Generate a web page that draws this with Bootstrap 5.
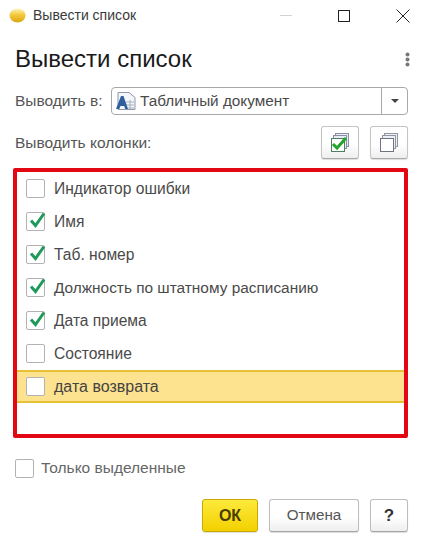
<!DOCTYPE html>
<html lang="ru">
<head>
    <meta charset="UTF-8">
    <meta name="viewport" content="width=device-width, initial-scale=1.0">
    <title>Вывести список</title>
    <link href="https://cdn.jsdelivr.net/npm/bootstrap@5.3.0/dist/css/bootstrap.min.css" rel="stylesheet">
    <style>
        html, body { height: 546px; overflow: hidden; }
        body {
            font-family: "Liberation Sans", Arial, sans-serif;
            font-size: 15.5px;
            color: #555;
            background: #fff;
        }
        .title-strip { height: 31px; padding-left: 9px; color: #3a3a3a; font-size: 14px; }
        .title-strip .title-text { margin-left: 7px; }
        .win-row { margin-right: 21px; gap: 46px; }
        .form-head { padding: 13px 21px 0 15px; height: 56px; }
        .form-head h1 { font-size: 24px; font-weight: 400; color: #1a1a1a; margin: 0; line-height: 30px; }
        .dots { width: 5px; margin-top: 8px; }
        .body-pad { padding: 0 23px 0 15px; }
        .out-row { height: 28px; white-space: nowrap; }
        .out-select {
            width: 297px; height: 28px; margin-left: auto; flex: none;
            border: 1px solid #a8a8a8; border-radius: 4px; color: #4a4a4a;
        }
        .out-value { padding-left: 3px; gap: 4px; font-size: 15.3px; }
        .out-arrow { width: 26px; height: 100%; border-left: 1px solid #a8a8a8; }
        .cols-row { height: 33px; margin-top: 11px; }
        .tool-row { gap: 11px; }
        .tool-btn {
            width: 38px; height: 33px; padding: 0;
            border: 1px solid #c4c4c4; border-bottom-color: #a9a9a9; border-radius: 3px;
            background: linear-gradient(#fff 55%, #eee);
            box-shadow: 0 1px 1px #ddd;
        }
        .red-frame {
            margin: 9px 23px 0 13px; height: 270px;
            border: 4px solid #e30613; border-radius: 2px;
        }
        .col-line { height: 33px; padding-left: 9px; color: #4a4a4a; font-size: 15.6px; }
        .col-line.picked {
            background: #fde28f;
            border-top: 2px solid #e8c033; border-bottom: 2px solid #e8c033;
            color: #444; font-size: 16px;
        }
        .col-long { font-size: 15.4px; }
        .box-mark {
            width: 19px; height: 19px; flex: none; position: relative;
            background: #fff; border: 1px solid #b3b3b3; border-radius: 2px; margin-right: 9px;
        }
        .box-mark svg { position: absolute; left: 1px; top: -3px; }
        .only-row { margin: 20px 0 0 15px; height: 20px; color: #666; }
        .only-row .box-mark { margin-right: 7px; }
        .foot-row { margin: 21px 23px 0 0; gap: 11px; }
        .act-btn {
            height: 33px; padding: 0; font-size: 15.2px; color: #555;
            border: 1px solid #bdbdbd; border-bottom-color: #a5a5a5; border-radius: 3px;
            background: linear-gradient(#fff 55%, #eee);
            box-shadow: 0 1px 1px #ddd;
        }
        .act-ok {
            width: 56px; font-weight: 700; color: #4a3d00; font-size: 16px;
            background: linear-gradient(#fdea3c, #f3d000);
            border-color: #c9a900;
        }
        .act-cancel { width: 90px; }
        .act-help { width: 38px; font-weight: 700; color: #333; font-size: 17px; }
    </style>
</head>
<body>

    <div class="title-strip d-flex align-items-center">
        <svg width="17" height="15" viewBox="0 0 17 15">
            <defs>
                <linearGradient id="ball" x1="0" y1="0" x2="0" y2="1">
                    <stop offset="0" stop-color="#fff3c0"/>
                    <stop offset="0.45" stop-color="#f4c93c"/>
                    <stop offset="1" stop-color="#d9a514"/>
                </linearGradient>
            </defs>
            <ellipse cx="8.5" cy="7.5" rx="8" ry="7" fill="url(#ball)"/>
        </svg>
        <span class="title-text">Вывести список</span>
        <div class="ms-auto d-flex align-items-center win-row">
            <svg width="12" height="2"><rect width="12" height="1" fill="#d2d2d2"/></svg>
            <svg width="12" height="12"><rect x="0.5" y="0.5" width="11" height="11" fill="none" stroke="#222"/></svg>
            <svg width="14" height="14"><path d="M0.5 0.5L13.5 13.5M13.5 0.5L0.5 13.5" stroke="#222" fill="none"/></svg>
        </div>
    </div>

    <div class="form-head d-flex justify-content-between align-items-start">
        <h1>Вывести список</h1>
        <svg class="dots" width="5" height="15" viewBox="0 0 5 15">
            <circle cx="2.5" cy="2.5" r="2" fill="#777"/>
            <circle cx="2.5" cy="7.5" r="2" fill="#777"/>
            <circle cx="2.5" cy="12.5" r="2" fill="#777"/>
        </svg>
    </div>

    <div class="body-pad">
        <div class="out-row d-flex align-items-center">
            <span>Выводить в:</span>
            <div class="out-select d-flex align-items-center justify-content-between">
                <div class="out-value d-flex align-items-center">
                    <svg width="21" height="20" viewBox="0 0 21 20">
                        <path d="M3 1.5H14L20 6.5V18.5H3Z" fill="#f3f5f8" stroke="#8d98a8"/>
                        <path d="M11 11H19M11 14H19M11 17H19M15 9V18" stroke="#a5b0bf"/>
                        <path d="M1 18L6 5H8.5L13 18H10.2L9.2 15H5.4L4.3 18Z" fill="#2f5e9e"/>
                    </svg>
                    <span>Табличный документ</span>
                </div>
                <div class="out-arrow d-flex align-items-center justify-content-center">
                    <svg width="8" height="4"><path d="M0 0H8L4 4Z" fill="#444"/></svg>
                </div>
            </div>
        </div>

        <div class="cols-row d-flex align-items-center">
            <span>Выводить колонки:</span>
            <div class="ms-auto d-flex tool-row">
                <button class="tool-btn d-flex align-items-center justify-content-center" type="button">
                    <svg width="20" height="20" viewBox="0 0 20 20">
                        <rect x="5.5" y="0.5" width="13" height="13" fill="#e9ecf4" stroke="#8b8fa3"/>
                        <rect x="3.5" y="2.5" width="13" height="13" fill="#e9ecf4" stroke="#8b8fa3"/>
                        <rect x="1.5" y="5.5" width="13" height="13" fill="#fff" stroke="#4f7f63"/>
                        <path d="M3 11L7 15L16 5" fill="none" stroke="#25a52c" stroke-width="3"/>
                    </svg>
                </button>
                <button class="tool-btn d-flex align-items-center justify-content-center" type="button">
                    <svg width="20" height="20" viewBox="0 0 20 20">
                        <rect x="5.5" y="0.5" width="13" height="13" fill="#eceff3" stroke="#8f96a0"/>
                        <rect x="3.5" y="2.5" width="13" height="13" fill="#eceff3" stroke="#8f96a0"/>
                        <rect x="1.5" y="5.5" width="13" height="13" fill="#fff" stroke="#6d7480"/>
                    </svg>
                </button>
            </div>
        </div>
    </div>

    <div class="red-frame" id="colList"></div>

    <div class="only-row d-flex align-items-center">
        <span class="box-mark"></span>
        <span>Только выделенные</span>
    </div>

    <div class="foot-row d-flex justify-content-end">
        <button class="act-btn act-ok" type="button">ОК</button>
        <button class="act-btn act-cancel" type="button">Отмена</button>
        <button class="act-btn act-help" type="button">?</button>
    </div>

    <script src="https://cdn.jsdelivr.net/npm/bootstrap@5.3.0/dist/js/bootstrap.bundle.min.js"></script>
    <script>
        // columns of the list: name, checked, highlighted
        var columns = [
            ['Индикатор ошибки', false, false],
            ['Имя', true, false],
            ['Таб. номер', true, false],
            ['<span class="col-long">Должность по штатному расписанию</span>', true, false],
            ['Дата приема', true, false],
            ['Состояние', false, false],
            ['дата возврата', false, true]
        ];
        var tick = '<svg width="19" height="20" viewBox="0 0 19 20"><path d="M3 10.5L7.5 15.5L16 3.5" fill="none" stroke="#1f9a5a" stroke-width="3"/></svg>';
        var html = '';
        for (var i = 0; i < columns.length; i++) {
            html += '<div class="col-line d-flex align-items-center' + (columns[i][2] ? ' picked' : '') + '">' +
                '<span class="box-mark">' + (columns[i][1] ? tick : '') + '</span>' +
                '<span>' + columns[i][0] + '</span></div>';
        }
        document.getElementById('colList').innerHTML = html;
    </script>

</body>
</html>
